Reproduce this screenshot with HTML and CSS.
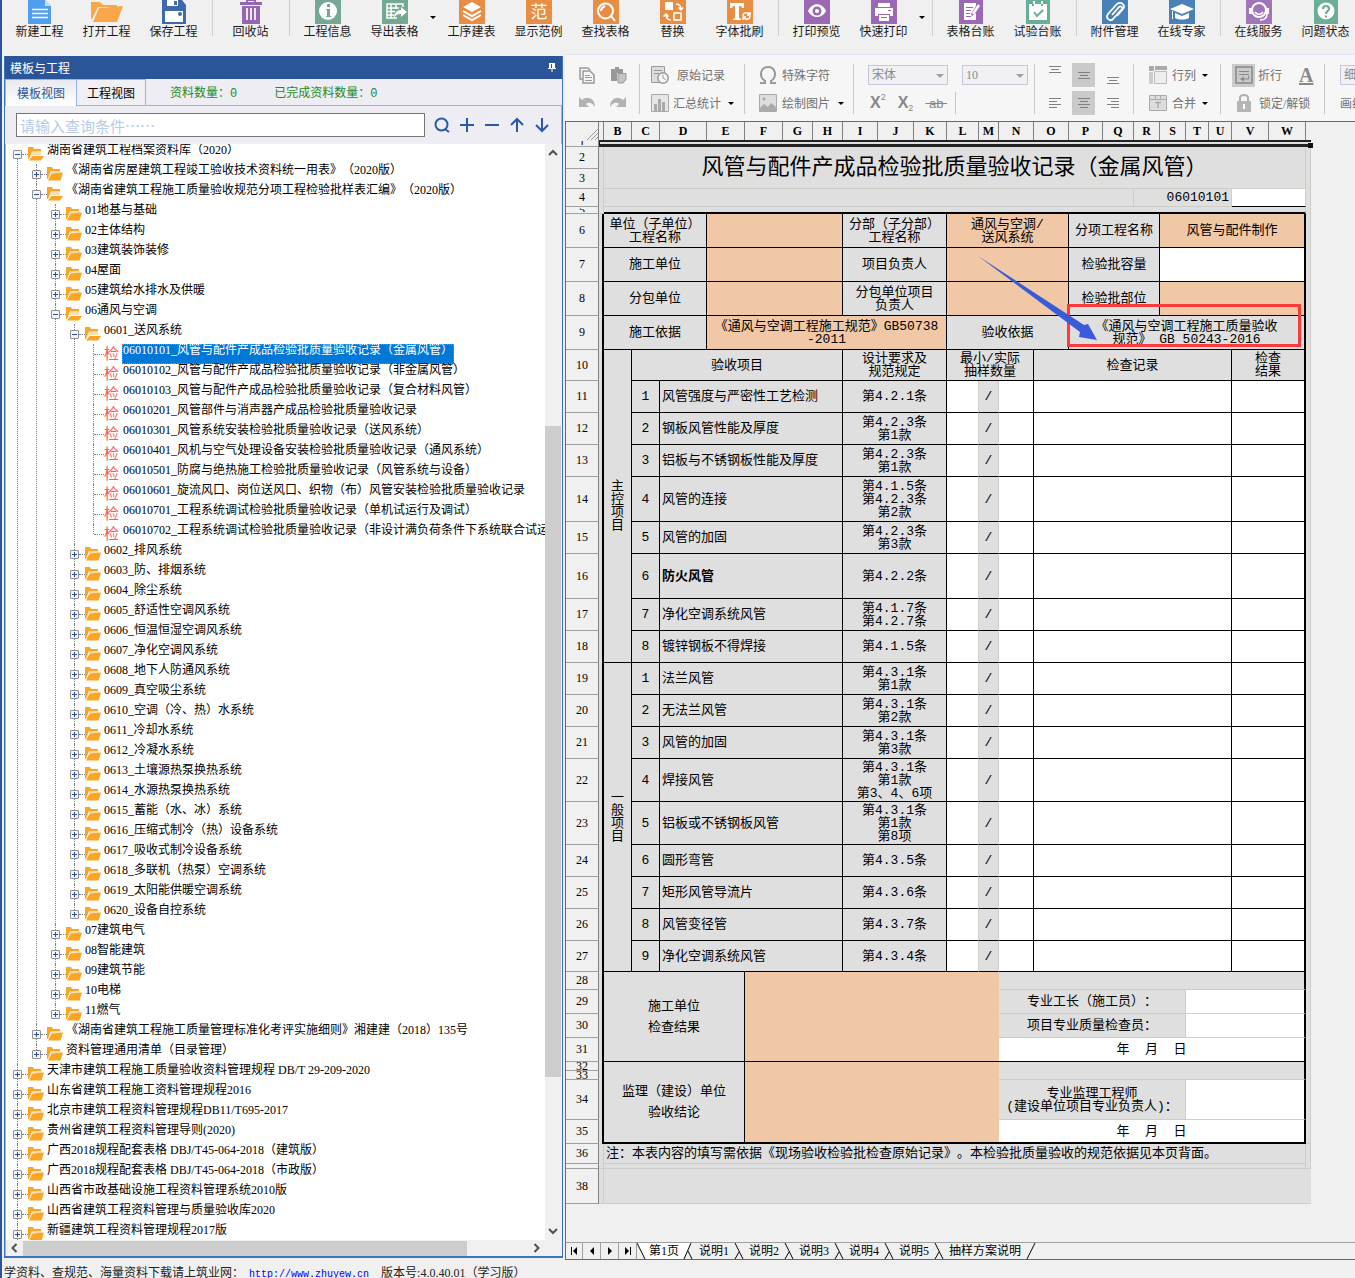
FILE: index.html
```html
<!DOCTYPE html>
<html lang="zh-CN">
<head>
  <meta charset="UTF-8">
  <meta name="viewport" content="width=device-width, initial-scale=1.0">
  <title>资料管理软件</title>
  <link rel="stylesheet" href="styles.css">
</head>
<body>

<!-- 图标 -->
<svg class="defs" width="0" height="0" aria-hidden="true">
  <symbol id="folder" viewBox="0 0 16 14">
    <path fill="#fba524" d="M0 0h5l1 2h7v2H4L1 12H0z"/>
    <path fill="#f6dfb8" d="M4 4h10v2H3.500L1.500 11.500z"/>
    <path fill="#fba524" d="M4.500 6.500L16 5.500 13.500 13.500H1z"/>
  </symbol>
  <symbol id="folder-open" viewBox="0 0 16 14">
    <path fill="#fba524" d="M0 0h5l1 2h7v2.500H4L1 12H0z"/>
    <path fill="#f6dfb8" d="M4 5h9v3H4L1.500 12z"/>
    <path fill="#fba524" d="M4.500 9H16l-3 4.500H1z"/>
  </symbol>
</svg>

<header class="ribbon">
  <button class="big"><svg viewBox="0 0 26 24"><path fill="#4f9fee" d="M1 0h17l6 6v18H1z"/><path fill="#bfe0ff" d="M18 0l6 6h-6z"/><path stroke="#fff" stroke-width="1.500" d="M5 9.500h16M5 13.500h16M5 17.500h16"/></svg>新建工程</button>
  <button class="big"><svg viewBox="0 0 32 24"><path fill="#f9a648" d="M0 2h9l3 3h14v2H7L1 19H0z"/><path fill="#f9a648" d="M8 8l24-2-6 16H2z"/></svg>打开工程</button>
  <button class="big"><svg viewBox="0 0 26 24"><path fill="#3f69ad" d="M1 0h20l4 5v19H1z"/><path fill="#fff" d="M6 0h11v6H6zM4 11h18v11H4z"/><path fill="#3f69ad" d="M13 1h3v4h-3z"/><circle cx="19" cy="14" r="2" fill="#3f69ad"/></svg>保存工程</button>
  <i class="bar"></i>
  <button class="big"><svg viewBox="0 0 26 24"><path fill="#9467b3" d="M2 2h22v3H2zM4 6h18v18H4z"/><path fill="none" stroke="#9467b3" stroke-width="2" d="M9 3V0h8v3"/><path stroke="#efe6f5" stroke-width="2" d="M9 8v12M13 8v12M17 8v12"/></svg>回收站</button>
  <i class="bar"></i>
  <button class="big"><svg viewBox="0 0 26 24"><path fill="#74a893" d="M0 0h26v24H0z"/><circle cx="13" cy="11" r="9" fill="#fff"/><path fill="#74a893" d="M12 4h3v3h-3zM11 9h4v7h1v1h-5v-1h1v-6h-1z"/></svg>工程信息</button>
  <button class="big"><svg viewBox="0 0 26 24"><path fill="#74a893" d="M0 0h26v24H0z"/><path fill="none" stroke="#fff" stroke-width="1.500" d="M21 7V4H5v14h10M5 8h12M5 11.500h8M5 15h7M9 4v14M14 4v5"/><path fill="#fff" d="M19 7l6 5-6 5v-3c-4 0-5 1-7 4 0-5 3-8 7-8z"/></svg>导出表格</button>
  <i class="more"></i>
  <button class="big"><svg viewBox="0 0 26 24"><path fill="#e78e44" d="M0 0h26v24H0z"/><path fill="#fff" d="M13 2l9 5-9 5-9-5z"/><path fill="none" stroke="#fff" stroke-width="2" d="M4 11l9 5 9-5M4 15l9 5 9-5"/></svg>工序建表</button>
  <button class="big"><svg viewBox="0 0 26 24"><path fill="#e78e44" d="M0 0h26v24H0z"/><text x="13" y="18" font-size="17" fill="#fff" text-anchor="middle">范</text></svg>显示范例</button>
  <button class="big"><svg viewBox="0 0 26 24"><path fill="#e78e44" d="M0 0h26v24H0z"/><circle cx="12.500" cy="11" r="7.500" fill="none" stroke="#fff" stroke-width="2"/><path fill="none" stroke="#fff" stroke-width="2" d="M18 16l4 5M8 11c0-3 2-4 4-5"/></svg>查找表格</button>
  <button class="big"><svg viewBox="0 0 26 24"><path fill="#e78e44" d="M0 0h26v24H0z"/><path fill="#fff" d="M5 2h8v8H5z"/><path fill="none" stroke="#fff" stroke-width="1.500" d="M14 13h7v7h-7zM16 4c3 0 5 1 5 6M18.500 7.500L21 10l2-2.500M11 20c-3 0-5-1-5-6M3.500 16.500L6 14l2.500 2.500"/></svg>替换</button>
  <button class="big"><svg viewBox="0 0 26 24"><path fill="#e78e44" d="M0 0h26v24H0z"/><path fill="#fff" d="M3 3h14v5h-2l-1-2h-2v12l2 1v1H6v-1l2-1V6H6L5 8H3z"/><path fill="none" stroke="#fff" stroke-width="1.500" d="M16 16c0-4 5-4 6-2M23 12v3h-3M23 16c0 4-5 4-6 2M16 20v-3h3"/></svg>字体批刷</button>
  <i class="bar"></i>
  <button class="big"><svg viewBox="0 0 26 24"><path fill="#9a68b5" d="M0 0h26v24H0z"/><path fill="#fff" d="M4 11c4-9 14-9 18 0-4 8-14 8-18 0z"/><circle cx="13" cy="11" r="4.500" fill="#9a68b5"/><circle cx="13" cy="11" r="2" fill="#fff"/></svg>打印预览</button>
  <button class="big"><svg viewBox="0 0 26 24"><path fill="#9a68b5" d="M0 0h26v24H0z"/><path fill="#fff" d="M7 3h12v4H7zM4 8h18v8h-3v-2H7v2H4zM8 15h10v6H8z"/><path stroke="#9a68b5" d="M10 17.500h6M17 10.500h3"/></svg>快速打印</button>
  <i class="more"></i>
  <i class="bar"></i>
  <button class="big"><svg viewBox="0 0 26 24"><path fill="#9a68b5" d="M1 0h24v24H1z"/><path fill="#fff" d="M6 3h12v3l-5 8 1 2 4-3v7H6z"/><path stroke="#9a68b5" d="M8 7.500h7M8 10.500h5M8 13.500h4M8 16.500h5"/><path stroke="#fff" stroke-width="2.500" d="M21 5l-6 9"/></svg>表格台账</button>
  <button class="big"><svg viewBox="0 0 26 24"><path fill="#6bae97" d="M1 0h24v24H1z"/><path fill="#fff" d="M4 4h18v16H4zM8 1h2v4H8zM16 1h2v4h-2z"/><path fill="none" stroke="#6bae97" stroke-width="2" d="M9 12l3 4 6-6M8 6V4M17 6V4"/></svg>试验台账</button>
  <i class="bar"></i>
  <button class="big"><svg viewBox="0 0 26 24"><path fill="#4a80b8" d="M0 0h26v24H0z"/><path fill="none" stroke="#fff" stroke-width="1.800" d="M10 15l7-8c2-2 4 1 3 2l-9 10c-3 3-8-1-5-5l9-10c4-3 9 1 6 5l-6 7"/></svg>附件管理</button>
  <button class="big"><svg viewBox="0 0 26 24"><path fill="#4a80b8" d="M0 0h26v24H0z"/><path fill="#fff" d="M13 4l12 5-12 5L1 9zM6 13l7 3 7-3v5c-4 2-10 2-14 0zM3 11h1v8H3z"/></svg>在线专家</button>
  <i class="bar"></i>
  <button class="big"><svg viewBox="0 0 26 24"><path fill="#a274ba" d="M0 0h26v24H0z"/><circle cx="13" cy="10" r="7" fill="none" stroke="#fff" stroke-width="2"/><path fill="#fff" d="M3 8h4v6H3zM19 8h4v6h-4z"/><path fill="none" stroke="#fff" stroke-width="1.500" d="M9 12c2 3 6 3 8 0M21 14c0 4-3 6-7 6"/></svg>在线服务</button>
  <button class="big"><svg viewBox="0 0 26 24"><path fill="#6bae97" d="M1 0h24v24H1z"/><circle cx="13" cy="11" r="8.500" fill="#fff"/><path fill="none" stroke="#6bae97" stroke-width="2.200" d="M10 9c0-4 6-4 6 0 0 2-3 2-3 5M13 15.500v2"/></svg>问题状态</button>
</header>

<div class="workspace">

  <aside class="panel">
    <div class="panel-title">模板与工程
      <svg width="8" height="9" viewBox="0 0 8 9"><path fill="#fff" d="M1 0h6v5h1v1H4.500v3h-1V6H0V5h1z"/><path stroke="#2a5699" d="M3.500 1v4"/></svg>
    </div>
    <div class="tabs">
      <button class="tab active">模板视图</button>
      <button class="tab">工程视图</button>
      <span class="count first">资料数量：<b>0</b></span>
      <span class="count">已完成资料数量：<b>0</b></span>
    </div>
    <div class="search">
      <input type="text" aria-label="查询条件" placeholder="请输入查询条件……">
      <button aria-label="查询"><svg viewBox="0 0 16 16"><circle cx="7.500" cy="7.500" r="6"/><path d="M11 12l4 3"/></svg></button>
      <button aria-label="展开"><svg viewBox="0 0 16 16"><path d="M8 1v14M1 8h14"/></svg></button>
      <button aria-label="收起"><svg viewBox="0 0 16 16"><path d="M1 8h14"/></svg></button>
      <button aria-label="上一个"><svg viewBox="0 0 16 16"><path d="M8 15V2M2 8l6-6 6 6"/></svg></button>
      <button aria-label="下一个"><svg viewBox="0 0 16 16"><path d="M8 1v13M2 8l6 6 6-6"/></svg></button>
    </div>
    <div class="tree-box">
      <ul class="tree" id="tree"></ul>
      <div class="vscroll">
        <svg viewBox="0 0 10 6"><path d="M1 5l4-4 4 4"/></svg>
        <div class="track"><div class="thumb"></div></div>
        <svg viewBox="0 0 10 6"><path d="M1 1l4 4 4-4"/></svg>
      </div>
    </div>
    <div class="hscroll">
      <svg viewBox="0 0 6 10"><path d="M5 1L1 5l4 4"/></svg>
      <div class="track"><div class="thumb"></div></div>
      <svg viewBox="0 0 6 10"><path d="M1 1l4 4-4 4"/></svg>
    </div>
  </aside>

  <main class="editor">
    <div class="tools">
      <div class="group clip">
        <div class="line"><button aria-label="复制"><svg viewBox="0 0 18 18"><path fill="none" stroke="#999" stroke-width="1.500" d="M5 13H2V2h8l2 2"/><path fill="#f6f6f6" stroke="#999" stroke-width="1.500" d="M5 5h7l4 4v8H5z"/><path stroke="#999" d="M7 9.500h5M7 11.500h7M7 14.500h7"/></svg></button><button aria-label="粘贴"><svg viewBox="0 0 18 18"><path fill="#999" d="M2 3h4V1h4v2h4v4H8v8H2z"/><path fill="#c4c4c4" stroke="#999" d="M9 7.500h8v6L14 17H9z"/></svg></button></div>
        <div class="line"><button aria-label="撤销"><svg viewBox="0 0 18 18"><path fill="#b2b2b2" d="M1 3l3 3c6-5 13-1 13 7-3-5-7-5-9-3l3 3H1z"/></svg></button><button aria-label="重做"><svg viewBox="0 0 18 18"><path fill="#b2b2b2" d="M17 3l-3 3C8 1 1 5 1 13c3-5 7-5 9-3l-3 3h10z"/></svg></button></div>
      </div>
      <div class="group record">
        <div class="line"><button><svg viewBox="0 0 18 18"><path fill="#ddd" stroke="#999" d="M.5.5h13v16H.5z"/><path stroke="#999" d="M3 4.500h8M3 7.500h5"/><circle cx="12" cy="12" r="5.200" fill="#f6f6f6" stroke="#999" stroke-width="1.500"/><path fill="none" stroke="#999" d="M12 8.500V12l3 2"/></svg>原始记录</button></div>
        <div class="line"><button><svg viewBox="0 0 18 18"><path fill="#e6e6e6" stroke="#aaa" d="M.5.5h17v17H.5z"/><path fill="#aaa" d="M3 10h3v7H3zM7 5h3v12H7zM11 8h3v9h-3z"/></svg>汇总统计<i class="drop"></i></button></div>
      </div>
      <div class="group insert">
        <div class="line"><button><svg viewBox="0 0 18 18"><path fill="none" stroke="#999" stroke-width="2" d="M1 17h5v-2C-1 10 2 1 9 1s10 9 3 14v2h5"/></svg>特殊字符</button></div>
        <div class="line"><button><svg viewBox="0 0 18 18"><path fill="#ddd" stroke="#aaa" d="M.5.5h17v17H.5z"/><path fill="#aaa" d="M1 14l4-4 4 3 3-4 5 4v4H1z"/><circle cx="5" cy="5" r="1.500" fill="#aaa"/></svg>绘制图片<i class="drop"></i></button></div>
      </div>
      <div class="group font">
        <div class="line">
          <span class="pick name"><select aria-label="字体"><option>宋体</option></select></span>
          <span class="pick size"><select aria-label="字号"><option>10</option></select></span>
        </div>
        <div class="line marks"><button aria-label="上标"><b>X</b><sup>2</sup></button><button aria-label="下标"><b>X</b><sub>2</sub></button><button aria-label="删除线"><s>&nbsp;ab&nbsp;</s></button><i class="rule"></i></div>
      </div>
      <div class="group align">
        <div class="line"><button aria-label="顶端对齐"><svg viewBox="0 0 16 24"><path d="M2 3.500h12M4 6.500h8M2 9.500h12"/></svg></button><button class="on" aria-label="垂直居中"><svg viewBox="0 0 16 24"><path d="M2 9.500h12M4 12.500h8M2 15.500h12"/></svg></button><button aria-label="底端对齐"><svg viewBox="0 0 16 24"><path d="M2 14.500h12M4 17.500h8M2 20.500h12"/></svg></button></div>
        <div class="line"><button aria-label="左对齐"><svg viewBox="0 0 16 24"><path d="M2 7.500h12M2 10.500h8M2 13.500h12M2 16.500h8"/></svg></button><button class="on" aria-label="居中"><svg viewBox="0 0 16 24"><path d="M2 7.500h12M4 10.500h8M2 13.500h12M4 16.500h8"/></svg></button><button aria-label="右对齐"><svg viewBox="0 0 16 24"><path d="M2 7.500h12M6 10.500h8M2 13.500h12M6 16.500h8"/></svg></button></div>
      </div>
      <div class="group cells">
        <div class="line"><button><svg viewBox="0 0 18 18"><path fill="#aaa" d="M0 0h5v5H0zM6 0h12v4H6z"/><path fill="#ccc" d="M0 6h4v12H0z"/><path fill="#eee" stroke="#bbb" d="M5.500 5.500h12v12h-12z"/></svg>行列<i class="drop"></i></button></div>
        <div class="line"><button><svg viewBox="0 0 18 18"><path fill="#ddd" stroke="#aaa" d="M.5 1.500h17v15H.5zM.5 5.500h17M6.500 1v4M11.500 1v4"/><path stroke="#aaa" stroke-width="1.500" d="M6 8.500h6M9 8v6"/></svg>合并<i class="drop"></i></button></div>
      </div>
      <div class="group wrap">
        <div class="line"><button class="fold"><span class="on"><svg viewBox="0 0 18 18"><path fill="none" stroke="#888" stroke-width="1.500" d="M1 1h16v16H1z"/><path fill="none" stroke="#888" d="M4 5.500h10M4 8.500h10M13.500 10v3H8"/><path fill="#888" d="M5 13l4-2.500v5z"/></svg></span>折行</button><button class="color" aria-label="字体颜色"><u>A</u></button></div>
        <div class="line"><button class="lock"><svg viewBox="0 0 18 18"><path fill="none" stroke="#b0b0b0" stroke-width="2" d="M5 8V4c0-4 8-4 8 0v4"/><path fill="#b5b5b5" d="M2 7h14v11H2z"/><path fill="#fff" d="M8 10h2v5H8z"/></svg>锁定/解锁</button></div>
      </div>
      <div class="group last">
        <div class="line"><span class="pick"><select aria-label="线型"><option>细线</option></select></span></div>
        <div class="line"><button>画线</button></div>
      </div>
    </div>

    <div class="sheet">
      <table>
        <colgroup>
          <col class="w33"><col class="w5"><col class="w28"><col class="w28"><col class="w47"><col class="w38"><col class="w38"><col class="w30"><col class="w30"><col class="w35"><col class="w36"><col class="w33"><col class="w32"><col class="w20"><col class="w35"><col class="w35"><col class="w34"><col class="w31"><col class="w26"><col class="w26"><col class="w23"><col class="w23"><col class="w37"><col class="w37"><col class="w5">
        </colgroup>
        <thead>
          <tr class="h18">
            <th class="corner"><svg width="11" height="11" viewBox="0 0 11 11"><path stroke="#999" d="M0 11L11 0M4 11l7-7M8 11l3-3"/></svg></th>
            <th></th><th>B</th><th>C</th><th>D</th><th>E</th><th>F</th><th>G</th><th>H</th><th>I</th><th>J</th><th>K</th><th>L</th><th>M</th><th>N</th><th>O</th><th>P</th><th>Q</th><th>R</th><th>S</th><th>T</th><th>U</th><th>V</th><th>W</th><th class="none"></th>
          </tr>
        </thead>
        <tbody>
          <tr class="h7"><th><span>1</span></th><td class="selected" colspan="24"></td></tr>
          <tr class="h22"><th>2</th><td class="soft" rowspan="4"></td><td class="soft title" colspan="22" rowspan="2">风管与配件产成品检验批质量验收记录（金属风管）</td><td class="soft" rowspan="34"></td></tr>
          <tr class="h20"><th>3</th></tr>
          <tr class="h18"><th>4</th><td class="soft" colspan="16"></td><td class="soft code" colspan="4">06010101</td><td class="white thin" colspan="2"></td></tr>
          <tr class="h7"><th><span>5</span></th><td class="top" colspan="22"></td></tr>
          <tr class="h34"><th>6</th><td class="left" rowspan="30"></td><td colspan="3">单位（子单位）<br>工程名称</td><td class="fill" colspan="4"></td><td colspan="3">分部（子分部）<br>工程名称</td><td class="fill" colspan="4">通风与空调/<br>送风系统</td><td colspan="3">分项工程名称</td><td class="fill right" colspan="5">风管与配件制作</td></tr>
          <tr class="h34"><th>7</th><td colspan="3">施工单位</td><td class="fill" colspan="4"></td><td colspan="3">项目负责人</td><td class="fill" colspan="4"></td><td colspan="3">检验批容量</td><td class="white right" colspan="5"></td></tr>
          <tr class="h34"><th>8</th><td colspan="3">分包单位</td><td class="fill" colspan="4"></td><td colspan="3">分包单位项目<br>负责人</td><td class="fill" colspan="4"></td><td colspan="3">检验批部位</td><td class="fill right" colspan="5"></td></tr>
          <tr class="h34"><th>9</th><td colspan="3">施工依据</td><td class="fill" colspan="7">《通风与空调工程施工规范》GB50738<br>-2011</td><td colspan="4">验收依据</td><td class="right" colspan="8">《通风与空调工程施工质量验收<br>规范》 GB 50243-2016</td></tr>
          <tr class="h31" id="itemHead"><th>10</th><td rowspan="9">主<br>控<br>项<br>目</td><td colspan="6">验收项目</td><td colspan="3">设计要求及<br>规范规定</td><td colspan="3">最小/实际<br>抽样数量</td><td colspan="7">检查记录</td><td class="right" colspan="2">检查<br>结果</td></tr>
          <tr class="h18" id="signHead"><th>28</th><td class="loose" colspan="4" rowspan="4">施工单位<br>检查结果</td><td class="fill plain" colspan="8" rowspan="4"></td><td class="soft right" colspan="10"></td></tr>
          <tr class="h24"><th>29</th><td class="soft" colspan="6">专业工长（施工员）：</td><td class="soft white right" colspan="4"></td></tr>
          <tr class="h24"><th>30</th><td class="soft" colspan="6">项目专业质量检查员：</td><td class="soft white right" colspan="4"></td></tr>
          <tr class="h24"><th>31</th><td class="white right" colspan="10">年&nbsp; 月&nbsp; 日</td></tr>
          <tr class="h9"><th><span>32</span></th><td class="loose bottom" colspan="4" rowspan="4">监理（建设）单位<br>验收结论</td><td class="fill plain bottom" colspan="8" rowspan="4"></td><td class="soft right" colspan="10" rowspan="2"></td></tr>
          <tr class="h9"><th><span>33</span></th></tr>
          <tr class="h40"><th>34</th><td class="soft" colspan="6">专业监理工程师<br>(建设单位项目专业负责人)：</td><td class="soft white right" colspan="4"></td></tr>
          <tr class="h24"><th>35</th><td class="white right bottom" colspan="10">年&nbsp; 月&nbsp; 日</td></tr>
          <tr class="h20"><th>36</th><td class="soft" rowspan="2"></td><td class="soft note" colspan="22">注：本表内容的填写需依据《现场验收检验批检查原始记录》。本检验批质量验收的规范依据见本页背面。</td><td class="soft" rowspan="2"></td></tr>
          <tr class="h5"><th></th><td class="soft" colspan="22"></td></tr>
          <tr class="h35"><th>38</th><td class="soft"></td><td class="soft open" colspan="23"></td></tr>
        </tbody>
      </table>
      <i class="handle"></i>
      <div class="mark"></div>
      <svg class="pointer" width="120" height="86" viewBox="0 0 120 86"><path fill="#3a5bd9" d="M0 0L106 69l4-1 9 16-18-3 1-5z"/></svg>
    </div>

    <div class="pages">
      <button class="nav" aria-label="首页"><svg viewBox="0 0 8 8"><path d="M1 0h1v8H1zM7 0v8L3 4z"/></svg></button>
      <button class="nav" aria-label="上一页"><svg viewBox="0 0 8 8"><path d="M6 0v8L2 4z"/></svg></button>
      <button class="nav" aria-label="下一页"><svg viewBox="0 0 8 8"><path d="M2 0v8l4-4z"/></svg></button>
      <button class="nav" aria-label="末页"><svg viewBox="0 0 8 8"><path d="M1 0v8l4-4zM6 0h1v8H6z"/></svg></button>
      <svg class="edge first" viewBox="0 0 12 16"><path fill="#fff" stroke="none" d="M0 0h12v16H8z"/><path d="M0 0l8 16"/></svg>
      <button class="page active">第1页</button>
      <svg class="edge" viewBox="0 0 20 16"><path fill="#fff" stroke="none" d="M0 0h12L5 16H0z"/><path d="M12 0L5 16M9 8l4 8"/></svg>
      <button class="page">说明1</button>
      <svg class="edge" viewBox="0 0 20 16"><path d="M6 0l8 16M10 9l-4 7"/></svg>
      <button class="page">说明2</button>
      <svg class="edge" viewBox="0 0 20 16"><path d="M6 0l8 16M10 9l-4 7"/></svg>
      <button class="page">说明3</button>
      <svg class="edge" viewBox="0 0 20 16"><path d="M6 0l8 16M10 9l-4 7"/></svg>
      <button class="page">说明4</button>
      <svg class="edge" viewBox="0 0 20 16"><path d="M6 0l8 16M10 9l-4 7"/></svg>
      <button class="page">说明5</button>
      <svg class="edge" viewBox="0 0 20 16"><path d="M6 0l8 16M10 9l-4 7"/></svg>
      <button class="page">抽样方案说明</button>
      <svg class="edge" viewBox="0 0 20 16"><path d="M14 0L6 16"/></svg>
    </div>
  </main>
</div>

<footer class="status">学资料、查规范、海量资料下载请上筑业网：<a href="#">http://www.zhuyew.cn</a><span>版本号:4.0.40.01（学习版）</span></footer>

<script src="script.js"></script>
</body>
</html>
```

FILE: styles.css
```css
* {
  box-sizing: border-box;
}

body {
  margin: 0;
  height: 100vh;
  display: flex;
  flex-direction: column;
  overflow: hidden;
  background-color: #f0f0f0;
  border-left: 2px solid #2a5699;
  font-family: "Liberation Serif", "Noto Sans CJK SC", sans-serif;
  font-size: 12px;
  color: #000;
  text-spacing-trim: space-all;
}

button, input, select {
  font: inherit;
  color: inherit;
  margin: 0;
  padding: 0;
  border: none;
  background: none;
}

.defs {
  position: absolute;
}

/* 顶部工具栏 */
.ribbon {
  display: flex;
  flex: none;
  height: 54px;
  padding-left: 4px;
  overflow: hidden;
}

.big {
  flex: none;
  display: flex;
  flex-direction: column;
  align-items: center;
  width: 67px;
  height: 40px;
  line-height: 16px;
  color: #1a1a1a;
}

.big svg {
  display: block;
  height: 24px;
  flex: none;
}

.bar {
  flex: none;
  width: 10px;
  height: 36px;
  background: linear-gradient(#cfcfcf, #cfcfcf) 5px 0 / 1px 100% no-repeat;
}

.more {
  flex: none;
  width: 10px;
  height: 36px;
}

.more::after {
  content: "";
  display: block;
  margin: 16px 0 0 2px;
  width: 0;
  border: 3px solid transparent;
  border-top-color: #000;
  border-bottom: none;
}

/* 左侧面板 */
.workspace {
  flex: 1;
  min-height: 0;
  display: flex;
}

.panel {
  flex: none;
  width: 559px;
  margin: 2px;
  display: flex;
  flex-direction: column;
  background-color: #eeedf3;
  border: 1px solid #3c74c4;
  border-width: 0 1px 2px 1px;
}

.panel-title {
  display: flex;
  justify-content: space-between;
  align-items: center;
  height: 23px;
  padding: 0 6px 0 5px;
  background-color: #2a5699;
  color: #fff;
}

.tabs {
  display: flex;
  height: 27px;
  border-bottom: 1px solid #94b6e8;
}

.tab {
  width: 70px;
  height: 27px;
  border: 1px solid #94b6e8;
  background-color: #f0f0f4;
}

.tab.active {
  width: 71px;
  border-width: 1px 0 0 1px;
  background: linear-gradient(#e9e9ef, #fff);
  color: #2a5699;
}

.count {
  margin-left: 37px;
  line-height: 29px;
  color: #1e8a1e;
}

.count.first {
  margin-left: 24px;
}

.count b {
  font-family: "Liberation Mono", monospace;
  font-weight: normal;
}

.search {
  display: flex;
  align-items: center;
  height: 38px;
  padding: 0 11px;
  gap: 9px;
  border-right: 1px solid #94b6e8;
}

.search input {
  flex: 1;
  height: 24px;
  padding: 0 3px;
  border: 1px solid #767676;
  background-color: #fff;
  font-family: "Noto Sans CJK SC", sans-serif;
  font-size: 15px;
}

.search input::placeholder {
  color: #b5cce8;
}

.search button, .search svg {
  display: block;
  width: 16px;
  height: 16px;
}

.search svg {
  fill: none;
  stroke: #2a5aa5;
  stroke-width: 2;
}

.tree-box {
  flex: 1;
  min-height: 0;
  display: flex;
  border-left: 1px solid #94b6e8;
}

.tree {
  flex: 1;
  min-width: 0;
  overflow: hidden;
  background-color: #fff;
}

.tree, .tree ul {
  margin: 0;
  padding: 0;
  list-style: none;
}

.tree ul {
  margin-left: 19px;
}

.tree li {
  position: relative;
}

.tree li::before {
  content: "";
  position: absolute;
  left: 11px;
  top: 0;
  bottom: 0;
  border-left: 1px dotted #808080;
}

.tree > li:first-child::before {
  top: 10px;
}

.tree ul > li:last-child::before {
  bottom: auto;
  height: 10px;
}

.node {
  display: flex;
  align-items: center;
  height: 20px;
  padding-left: 7px;
  white-space: nowrap;
}

.node.leaf {
  padding-left: 12px;
}

.node svg {
  flex: none;
  width: 16px;
  height: 14px;
  margin-right: 3px;
}

.toggle {
  position: relative;
  flex: none;
  width: 9px;
  height: 9px;
  border: 1px solid #919191;
  border-radius: 1px;
  background:
    linear-gradient(#2a4fa0, #2a4fa0) 1px 3px / 5px 1px no-repeat,
    #f4f4f4;
}

.toggle.plus {
  background:
    linear-gradient(#2a4fa0, #2a4fa0) 1px 3px / 5px 1px no-repeat,
    linear-gradient(#2a4fa0, #2a4fa0) 3px 1px / 1px 5px no-repeat,
    #f4f4f4;
}

.dash {
  flex: none;
  width: 6px;
  border-top: 1px dotted #808080;
}

.leaf .dash {
  width: 10px;
}

.check {
  flex: none;
  width: 18px;
  font-size: 15px;
  line-height: 20px;
  color: #f55;
}

.label {
  height: 20px;
  line-height: 13px;
}

.leaf .label {
  padding: 0 1px;
}

.label.current {
  background-color: #0078d7;
  color: #fff;
  outline: 1px dotted #e07a20;
  outline-offset: -1px;
}

.vscroll {
  display: flex;
  flex-direction: column;
  align-items: center;
  width: 17px;
  padding-right: 1px;
  background-color: #f0f0f0;
}

.vscroll svg {
  width: 10px;
  height: 18px;
}

.vscroll svg, .hscroll svg {
  fill: none;
  stroke: #505050;
  stroke-width: 2;
}

.track {
  flex: 1;
}

.vscroll .track {
  display: flex;
  flex-direction: column;
  width: 100%;
  padding-top: 264px;
}

.vscroll .thumb {
  flex: none;
  height: 82%;
  max-height: 651px;
  background-color: #cdcdcd;
}

.hscroll {
  display: flex;
  align-items: center;
  height: 16px;
  padding-right: 17px;
  background-color: #f0f0f0;
  border-left: 1px solid #94b6e8;
}

.hscroll svg {
  width: 17px;
  height: 10px;
}

.hscroll .thumb {
  width: 88%;
  height: 15px;
  background-color: #cdcdcd;
}

/* 编辑工具条 */
.editor {
  flex: 1;
  min-width: 0;
  display: flex;
  flex-direction: column;
}

.tools {
  display: flex;
  flex: none;
  height: 67px;
  padding-top: 6px;
  overflow: hidden;
  background-color: #f6f6f6;
  border-top: 1px solid #e2e3ef;
  color: #707070;
}

.group {
  position: relative;
  flex: none;
  display: flex;
  flex-direction: column;
  height: 56px;
}

.group:not(.last)::after {
  content: "";
  position: absolute;
  right: 0;
  top: 3px;
  height: 50px;
  border-right: 1px solid #c8c8c8;
}

.line {
  display: flex;
  align-items: center;
  height: 28px;
}

.line button {
  display: flex;
  align-items: center;
  white-space: nowrap;
}

.line svg {
  flex: none;
  width: 18px;
  height: 18px;
}

.drop {
  margin: 3px 0 0 7px;
  border: 3px solid transparent;
  border-top-color: #000;
}

.clip {
  width: 75px;
  padding-left: 13px;
}

.clip .line {
  gap: 13px;
}

.record {
  width: 105px;
  padding-left: 11px;
}

.record button {
  gap: 4px;
}

.record .line:first-child button {
  gap: 8px;
}

.insert {
  width: 109px;
  padding-left: 14px;
}

.insert button {
  gap: 5px;
}

.insert .drop, .record .drop {
  margin-left: 3px;
}

.font {
  width: 181px;
  padding-left: 14px;
}

.font .line {
  gap: 14px;
}

.pick {
  position: relative;
  width: 80px;
}

.pick.size {
  width: 66px;
}

.pick select {
  display: block;
  width: 100%;
  height: 20px;
  padding: 0 3px;
  border: 1px solid #c5c6de;
  background-color: #f0f0f5;
  appearance: none;
  color: #8a8a8a;
}

.pick::after {
  content: "";
  position: absolute;
  right: 4px;
  top: 9px;
  border: 4px solid transparent;
  border-top-color: #a0a0a0;
  border-bottom: none;
}

.font .marks {
  gap: 12px;
  padding-left: 2px;
  color: #888;
  font-family: "Liberation Sans", sans-serif;
}

.marks button {
  height: 20px;
}

.marks b {
  font-size: 16px;
}

.marks sup, .marks sub {
  font-size: 9px;
  line-height: 9px;
}

.marks sup {
  align-self: flex-start;
}

.marks sub {
  align-self: flex-end;
}

.marks s {
  font-size: 13px;
}

.marks .rule {
  height: 22px;
  border-left: 1px solid #c8c8c8;
  margin-left: -4px;
}

.align {
  width: 99px;
  padding-left: 8px;
}

.align .line {
  gap: 6px;
}

.align button {
  width: 23px;
  height: 24px;
  justify-content: center;
}

.align svg {
  width: 16px;
  height: 24px;
  fill: none;
  stroke: #808080;
}

.on {
  background-color: #cacaca;
}

.cells {
  width: 87px;
  padding-left: 15px;
}

.cells button {
  gap: 5px;
}

.cells .drop {
  margin-left: 1px;
}

.wrap {
  width: 104px;
  padding-left: 11px;
}

.fold {
  gap: 3px;
}

.fold .on {
  display: flex;
  align-items: center;
  justify-content: center;
  width: 23px;
  height: 23px;
}

.color {
  margin-left: 17px;
  font-size: 20px;
  font-weight: bold;
  color: #888;
}

.lock {
  padding-left: 3px;
  gap: 6px;
}

.last {
  padding-left: 15px;
}

/* 表格 */
.sheet {
  position: relative;
  flex: 1;
  min-height: 0;
  overflow: hidden;
  border-left: 1px solid #696969;
  border-top: 1px solid #696969;
}

.sheet table {
  table-layout: fixed;
  width: 745px;
  border-collapse: separate;
  border-spacing: 0;
  font-size: 13px;
  line-height: 13px;
}

.w5 { width: 5px; }
.w20 { width: 20px; }
.w23 { width: 23px; }
.w26 { width: 26px; }
.w28 { width: 28px; }
.w30 { width: 30px; }
.w31 { width: 31px; }
.w32 { width: 32px; }
.w33 { width: 33px; }
.w34 { width: 34px; }
.w35 { width: 35px; }
.w36 { width: 36px; }
.w37 { width: 37px; }
.w38 { width: 38px; }
.w47 { width: 47px; }

.h5 { height: 5px; }
.h7 { height: 7px; }
.h9 { height: 9px; }
.h18 { height: 18px; }
.h20 { height: 20px; }
.h22 { height: 22px; }
.h24 { height: 24px; }
.h31 { height: 31px; }
.h32 { height: 32px; }
.h34 { height: 34px; }
.h35 { height: 35px; }
.h40 { height: 40px; }
.h43 { height: 43px; }
.h45 { height: 45px; }

.sheet th {
  padding: 0;
  background-color: #f0f0f0;
  border-right: 1px solid #808080;
  font-size: 12px;
}

.sheet tbody th {
  border-bottom: 1px solid #a0a0a0;
  font-weight: normal;
}

.sheet th span {
  display: block;
  height: 4px;
  line-height: 4px;
  overflow: hidden;
}

.sheet .h9 span {
  height: 8px;
  line-height: 8px;
}

.sheet .corner {
  text-align: right;
  vertical-align: bottom;
}

.corner svg {
  display: block;
  margin-left: auto;
}

.sheet .none {
  border-right: none;
}

.sheet td {
  padding: 0;
  background-color: #dfdfdf;
  border-right: 1px solid #000;
  border-bottom: 1px solid #000;
  font-family: "Liberation Mono", "Noto Sans CJK SC", monospace;
  text-align: center;
  vertical-align: middle;
  white-space: nowrap;
}

.sheet td.soft {
  border-color: #d0cdc6;
}

.sheet td.selected {
  border: solid #222;
  border-width: 2px 0 3px 1px;
}

.sheet td.title {
  padding-top: 3px;
  font-size: 22px;
  line-height: 28px;
}

.sheet td.code {
  text-align: right;
  padding-right: 2px;
}

.sheet td.note {
  text-align: left;
  padding-left: 2px;
}

.sheet td.name {
  text-align: left;
  padding-left: 2px;
}

.sheet td.fill {
  background-color: #f0c8a5;
}

.sheet td.white {
  background-color: #fff;
}

.sheet td.plain {
  border-right: none;
}

.sheet td.thin {
  border-right-color: #d0cdc6;
}

.sheet td.loose {
  line-height: 21px;
}

.sheet td.top {
  border-right-color: #d0cdc6;
  border-bottom: 2px solid #000;
}

.sheet td.left {
  border-right: 2px solid #000;
  border-bottom: none;
}

.sheet td.right {
  border-right: 2px solid #000;
}

.sheet td.bottom {
  border-bottom: 2px solid #000;
}

.sheet td.open {
  border-right: none;
}

.handle {
  position: absolute;
  left: 742px;
  top: 21px;
  width: 5px;
  height: 5px;
  background-color: #111;
}

/* 标注 */
.mark {
  position: absolute;
  left: 501px;
  top: 182px;
  width: 234px;
  height: 43px;
  border: 3px solid #fb3b3b;
}

.pointer {
  position: absolute;
  left: 412px;
  top: 134px;
}

/* 页签 */
.pages {
  display: flex;
  flex: none;
  height: 18px;
  border-left: 1px solid #696969;
  border-top: 1px solid #a0a0a0;
  border-bottom: 1px solid #696969;
}

.nav {
  flex: none;
  display: flex;
  align-items: center;
  justify-content: center;
  width: 17px;
  border-right: 1px solid #a0a0a0;
}

.nav + .nav {
  width: 18px;
}

.nav svg {
  width: 8px;
  height: 8px;
}

.edge {
  flex: none;
  width: 20px;
  height: 16px;
  fill: none;
  stroke: #000;
}

.edge.first {
  width: 12px;
}

.page {
  flex: none;
  line-height: 15px;
}

.page.active {
  background-color: #fff;
}

/* 状态栏 */
.status {
  flex: none;
  height: 18px;
  padding-left: 2px;
  line-height: 26px;
  overflow: hidden;
  white-space: nowrap;
  color: #222;
}

.status a {
  margin: 0 12px 0 5px;
  font-family: "Liberation Mono", monospace;
  font-size: 10px;
  color: #00f;
}
```

FILE: script.js
```js
// 模板树
const tree = [
  { t: "湖南省建筑工程档案资料库（2020）", c: [
    { t: "《湖南省房屋建筑工程竣工验收技术资料统一用表》（2020版）" },
    { t: "《湖南省建筑工程施工质量验收规范分项工程检验批样表汇编》（2020版）", c: [
      { t: "01地基与基础" },
      { t: "02主体结构" },
      { t: "03建筑装饰装修" },
      { t: "04屋面" },
      { t: "05建筑给水排水及供暖" },
      { t: "06通风与空调", c: [
        { t: "0601_送风系统", c: [
          { t: "06010101_风管与配件产成品检验批质量验收记录（金属风管）", leaf: true, current: true },
          { t: "06010102_风管与配件产成品检验批质量验收记录（非金属风管）", leaf: true },
          { t: "06010103_风管与配件产成品检验批质量验收记录（复合材料风管）", leaf: true },
          { t: "06010201_风管部件与消声器产成品检验批质量验收记录", leaf: true },
          { t: "06010301_风管系统安装检验批质量验收记录（送风系统）", leaf: true },
          { t: "06010401_风机与空气处理设备安装检验批质量验收记录（通风系统）", leaf: true },
          { t: "06010501_防腐与绝热施工检验批质量验收记录（风管系统与设备）", leaf: true },
          { t: "06010601_旋流风口、岗位送风口、织物（布）风管安装检验批质量验收记录", leaf: true },
          { t: "06010701_工程系统调试检验批质量验收记录（单机试运行及调试）", leaf: true },
          { t: "06010702_工程系统调试检验批质量验收记录（非设计满负荷条件下系统联合试运行）", leaf: true }
        ] },
        { t: "0602_排风系统" },
        { t: "0603_防、排烟系统" },
        { t: "0604_除尘系统" },
        { t: "0605_舒适性空调风系统" },
        { t: "0606_恒温恒湿空调风系统" },
        { t: "0607_净化空调风系统" },
        { t: "0608_地下人防通风系统" },
        { t: "0609_真空吸尘系统" },
        { t: "0610_空调（冷、热）水系统" },
        { t: "0611_冷却水系统" },
        { t: "0612_冷凝水系统" },
        { t: "0613_土壤源热泵换热系统" },
        { t: "0614_水源热泵换热系统" },
        { t: "0615_蓄能（水、冰）系统" },
        { t: "0616_压缩式制冷（热）设备系统" },
        { t: "0617_吸收式制冷设备系统" },
        { t: "0618_多联机（热泵）空调系统" },
        { t: "0619_太阳能供暖空调系统" },
        { t: "0620_设备自控系统" }
      ] },
      { t: "07建筑电气" },
      { t: "08智能建筑" },
      { t: "09建筑节能" },
      { t: "10电梯" },
      { t: "11燃气" }
    ] },
    { t: "《湖南省建筑工程施工质量管理标准化考评实施细则》湘建建（2018）135号" },
    { t: "资料管理通用清单（目录管理）" }
  ] },
  { t: "天津市建筑工程施工质量验收资料管理规程 DB/T 29-209-2020" },
  { t: "山东省建筑工程施工资料管理规程2016" },
  { t: "北京市建筑工程资料管理规程DB11/T695-2017" },
  { t: "贵州省建筑工程资料管理导则(2020)" },
  { t: "广西2018规程配套表格 DBJ/T45-064-2018（建筑版）" },
  { t: "广西2018规程配套表格 DBJ/T45-064-2018（市政版）" },
  { t: "山西省市政基础设施工程资料管理系统2010版" },
  { t: "山西省建筑工程资料管理与质量验收库2020" },
  { t: "新疆建筑工程资料管理规程2017版" }
];

function renderNode(n) {
  if (n.leaf) {
    return `<li><div class="node leaf"><i class="dash"></i><span class="check">检</span><span class="label${n.current ? " current" : ""}">${n.t}</span></div></li>`;
  }
  const icon = n.c ? "folder-open" : "folder";
  const children = n.c ? `<ul>${n.c.map(renderNode).join("")}</ul>` : "";
  return `<li><div class="node"><button class="toggle ${n.c ? "minus" : "plus"}" aria-label="展开或收起"></button><i class="dash"></i><svg><use href="#${icon}"/></svg><span class="label">${n.t}</span></div>${children}</li>`;
}

document.getElementById("tree").innerHTML = tree.map(renderNode).join("");

// 验收项目：行高, 序号, 名称, 条款
const items = [
  ["h32", 1, "风管强度与严密性工艺检测", "第4.2.1条"],
  ["h32", 2, "钢板风管性能及厚度", "第4.2.3条<br>第1款"],
  ["h32", 3, "铝板与不锈钢板性能及厚度", "第4.2.3条<br>第1款"],
  ["h45", 4, "风管的连接", "第4.1.5条<br>第4.2.3条<br>第2款"],
  ["h32", 5, "风管的加固", "第4.2.3条<br>第3款"],
  ["h45", 6, "<b>防火风管</b>", "第4.2.2条"],
  ["h32", 7, "净化空调系统风管", "第4.1.7条<br>第4.2.7条"],
  ["h32", 8, "镀锌钢板不得焊接", "第4.1.5条"],
  ["h32", 1, "法兰风管", "第4.3.1条<br>第1款"],
  ["h32", 2, "无法兰风管", "第4.3.1条<br>第2款"],
  ["h32", 3, "风管的加固", "第4.3.1条<br>第3款"],
  ["h43", 4, "焊接风管", "第4.3.1条<br>第1款<br>第3、4、6项"],
  ["h43", 5, "铝板或不锈钢板风管", "第4.3.1条<br>第1款<br>第8项"],
  ["h32", 6, "圆形弯管", "第4.3.5条"],
  ["h32", 7, "矩形风管导流片", "第4.3.6条"],
  ["h32", 8, "风管变径管", "第4.3.7条"],
  ["h31", 9, "净化空调系统风管", "第4.3.4条"]
];

const rows = items.map(([h, no, name, clause], i) => {
  const side = i === 8 ? '<td rowspan="9">一<br>般<br>项<br>目</td>' : "";
  return `<tr class="${h}"><th>${i + 11}</th>${side}<td>${no}</td><td class="name" colspan="5">${name}</td><td colspan="3">${clause}</td><td class="white thin"></td><td class="thin">/</td><td class="white"></td><td class="white" colspan="7"></td><td class="white right" colspan="2"></td></tr>`;
}).join("");

document.getElementById("itemHead").insertAdjacentHTML("afterend", rows);
```
